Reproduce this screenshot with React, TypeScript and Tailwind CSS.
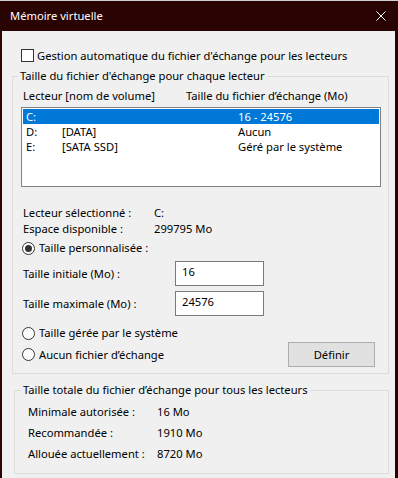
import React from "react";

function Radio({ checked }: { checked?: boolean }) {
  return (
    <div className="w-[13px] h-[13px] rounded-full border border-[#333333] bg-white flex items-center justify-center shrink-0">
      {checked && <div className="w-[7px] h-[7px] rounded-full bg-[#333333]" />}
    </div>
  );
}

function Row({ drive, name, size, selected }: { drive: string; name: string; size: string; selected?: boolean }) {
  return (
    <div className={`h-[15px] leading-[15px] flex items-center pl-[3px] ${selected ? "bg-[#0078d7] text-white" : ""}`}>
      <div className="w-[36px]">{drive}</div>
      <div className="w-[176px]">{name}</div>
      <div>{size}</div>
    </div>
  );
}

export default function App() {
  return (
    <div className="w-[398px] h-[478px] overflow-hidden flex flex-col bg-[#f0f0f0] text-[11.2px] text-black font-['Noto_Sans',sans-serif] leading-[16px]">
      <div className="h-[1px] bg-[#cfcfcf] shrink-0" />
      <div className="h-[30px] shrink-0 bg-[#2a0303] flex items-center justify-between pl-[10px] text-white">
        <span>Mémoire virtuelle</span>
        <svg width="10" height="10" viewBox="0 0 10 10" className="mr-[12px]">
          <path d="M0.5 0.5 L9.5 9.5 M9.5 0.5 L0.5 9.5" stroke="#ffffff" strokeWidth="1" />
        </svg>
      </div>
      <div className="flex-1 border-l-2 border-r-[3px] border-[#2a0303] flex flex-col">
        <div className="mt-[18px] ml-[19px] h-[13px] flex items-center gap-[3px]">
          <div className="w-[13px] h-[13px] border border-[#333333] bg-white shrink-0" />
          <span className="whitespace-nowrap">Gestion automatique du fichier d'échange pour les lecteurs</span>
        </div>

        <div className="mt-[14px] ml-[10px] w-[377px] h-[298px] shrink-0 relative border border-[#dcdcdc] flex flex-col">
          <div className="absolute left-[5px] top-[-9px] px-[2px] bg-[#f0f0f0] whitespace-nowrap">
            Taille du fichier d'échange pour chaque lecteur
          </div>
          <div className="mt-[11px] pl-[10px] flex h-[16px] whitespace-nowrap">
            <div className="w-[163px]">Lecteur [nom de volume]</div>
            <div>Taille du fichier d’échange (Mo)</div>
          </div>
          <div className="mt-[3px] ml-[8px] w-[360px] h-[80px] border border-[#828282] bg-white p-[1px] whitespace-nowrap">
            <Row drive="C:" name="" size="16 - 24576" selected />
            <Row drive="D:" name="[DATA]" size="Aucun" />
            <Row drive="E:" name="[SATA SSD]" size="Géré par le système" />
          </div>
          <div className="mt-[18px] pl-[10px] flex h-[16px] whitespace-nowrap">
            <div className="w-[131px]">Lecteur sélectionné :</div>
            <div>C:</div>
          </div>
          <div className="pl-[10px] flex h-[16px] whitespace-nowrap">
            <div className="w-[131px]">Espace disponible :</div>
            <div>299795 Mo</div>
          </div>
          <div className="mt-[3px] ml-[9px] flex items-center gap-[4px] h-[16px] whitespace-nowrap">
            <Radio checked />
            <span>Taille personnalisée :</span>
          </div>
          <div className="mt-[5px] pl-[10px] flex items-center h-[25px] whitespace-nowrap">
            <div className="w-[152px]">Taille initiale (Mo) :</div>
            <div className="w-[89px] h-[25px] border border-[#7a7a7a] bg-white pl-[6px] flex items-center pb-[4px]">16</div>
          </div>
          <div className="mt-[5px] pl-[10px] flex items-center h-[25px] whitespace-nowrap">
            <div className="w-[152px]">Taille maximale (Mo) :</div>
            <div className="w-[89px] h-[25px] border border-[#7a7a7a] bg-white pl-[6px] flex items-center pb-[4px]">24576</div>
          </div>
          <div className="mt-[9px] ml-[9px] flex items-center gap-[4px] h-[16px] whitespace-nowrap">
            <Radio />
            <span>Taille gérée par le système</span>
          </div>
          <div className="mt-[1px] ml-[9px] mr-[13px] flex items-center justify-between h-[25px] whitespace-nowrap">
            <div className="flex items-center gap-[4px]">
              <Radio />
              <span>Aucun fichier d’échange</span>
            </div>
            <div className="w-[87px] h-[25px] bg-[#e1e1e1] border border-[#adadad] flex items-center justify-center">
              Définir
            </div>
          </div>
        </div>

        <div className="mt-[16px] ml-[12px] w-[375px] h-[84px] shrink-0 relative border border-[#dcdcdc] flex flex-col pt-[10px]">
          <div className="absolute left-[6px] top-[-9px] px-[2px] bg-[#f0f0f0] whitespace-nowrap">
            Taille totale du fichier d’échange pour tous les lecteurs
          </div>
          <div className="pl-[13px] flex items-center h-[21px] whitespace-nowrap">
            <div className="w-[129px]">Minimale autorisée :</div>
            <div>16 Mo</div>
          </div>
          <div className="pl-[13px] flex items-center h-[21px] whitespace-nowrap">
            <div className="w-[129px]">Recommandée :</div>
            <div>1910 Mo</div>
          </div>
          <div className="pl-[13px] flex items-center h-[21px] whitespace-nowrap">
            <div className="w-[129px]">Allouée actuellement :</div>
            <div>8720 Mo</div>
          </div>
        </div>
      </div>
    </div>
  );
}
